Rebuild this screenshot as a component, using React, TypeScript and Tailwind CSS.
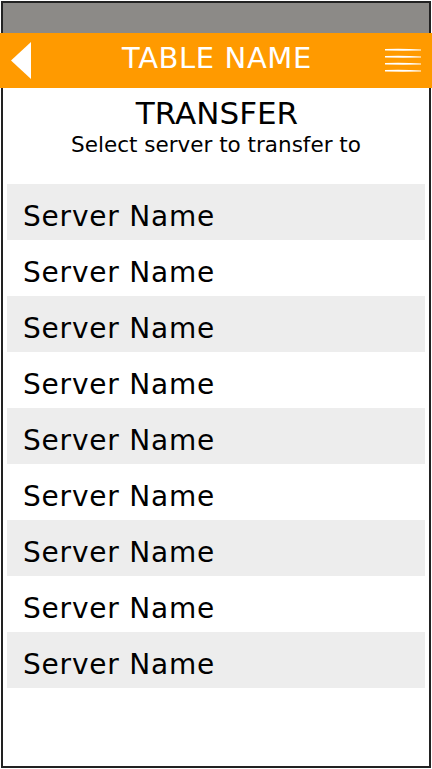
import React from "react";

const rows = Array.from({ length: 9 }, (_, i) => i);

function BackArrow() {
  return (
    <svg width="22" height="38" viewBox="0 0 22 38" className="block">
      <polygon points="1,18.5 21,0 21,37" fill="#ffffff" />
    </svg>
  );
}

function MenuLines() {
  return (
    <svg width="38" height="26" viewBox="0 0 38 26" className="block">
      {[1, 8, 15, 22].map((y) => (
        <path
          key={y}
          d={`M1 ${y} Q19 ${y - 0.8} 37 ${y + 0.6} L37 ${y + 1.6} Q19 ${y + 1.8} 1 ${y + 1.6} Z`}
          fill="#ffffff"
        />
      ))}
    </svg>
  );
}

export default function App() {
  return (
    <div
      className="w-[432px] h-[769px] bg-white flex flex-col overflow-hidden"
      style={{ fontFamily: '"DejaVu Sans", "Noto Sans", sans-serif' }}
    >
      {/* status bar */}
      <div className="h-[32px] mx-[1px] mt-[1px] bg-[#8c8a87] border-t-2 border-x-2 border-[#222222]" />

      {/* app bar */}
      <div className="h-[55px] bg-[#ff9a00] flex items-center justify-between pl-[10px] pr-[10px] relative">
        <BackArrow />
        <div className="absolute left-0 right-0 top-0 bottom-0 flex items-center justify-center pointer-events-none">
          <span className="text-white text-[29px] tracking-[0.6px] leading-none ml-[2px] mt-[-4px]">
            TABLE NAME
          </span>
        </div>
        <MenuLines />
      </div>

      {/* body */}
      <div className="flex-1 mx-[1px] mb-[1px] border-x-2 border-b-2 border-[#222222] flex flex-col">
        <div className="flex flex-col items-center pt-[7px]">
          <div className="text-[31px] leading-[36px] text-black ml-[2px]">TRANSFER</div>
          <div className="text-[21.5px] leading-[28px] text-black">
            Select server to transfer to
          </div>
        </div>

        <div className="mt-[25px] pl-[4px] pr-[4px] flex flex-col">
          {rows.map((i) => (
            <div
              key={i}
              className={`h-[56px] flex items-center pl-[16px] ${i % 2 === 0 ? "bg-[#ededed]" : "bg-white"}`}
            >
              <span className="text-[28px] tracking-[0.8px] text-black leading-none mt-[10px]">
                Server Name
              </span>
            </div>
          ))}
        </div>
      </div>
    </div>
  );
}
